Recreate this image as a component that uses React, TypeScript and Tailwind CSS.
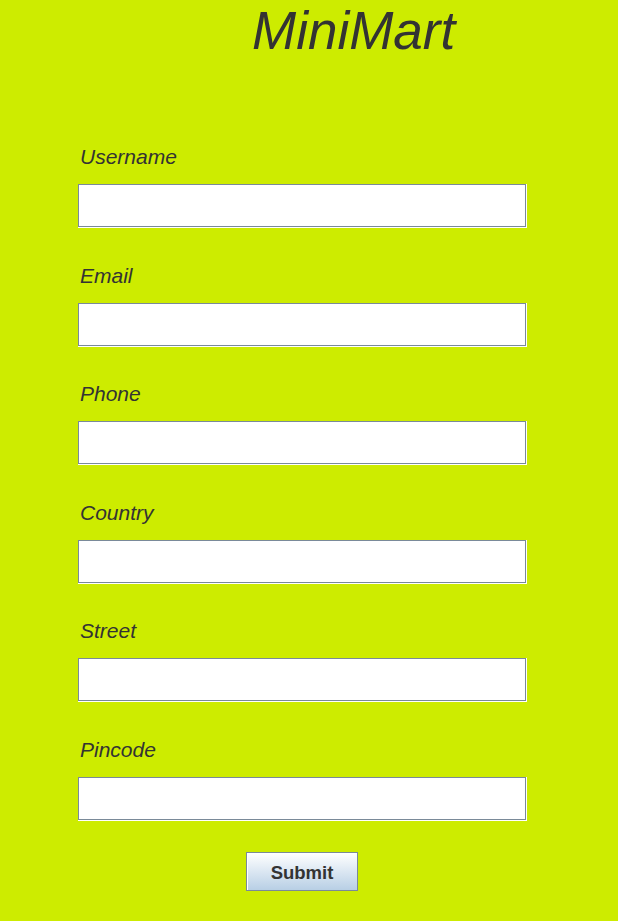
import { FC } from "react";

const fields = [
  { label: "Username", gap: "mt-[84px]" },
  { label: "Email", gap: "mt-[36px]" },
  { label: "Phone", gap: "mt-[35px]" },
  { label: "Country", gap: "mt-[36px]" },
  { label: "Street", gap: "mt-[35px]" },
  { label: "Pincode", gap: "mt-[36px]" },
];

const TextField: FC = () => {
  return (
    <div className="w-[449px] h-[44px] bg-white border-r border-b border-white">
      <div className="w-full h-full border border-[#7a8a99] bg-white" />
    </div>
  );
};

const App: FC = () => {
  return (
    <div
      className="w-[618px] h-[921px] bg-[#cdec00] pl-[78px] pt-[1px] overflow-hidden"
      style={{ fontFamily: '"Liberation Sans", Arial, sans-serif' }}
    >
      <h1 className="ml-[174px] text-[53px] leading-[60px] italic text-[#333333]">
        MiniMart
      </h1>
      {fields.map((f) => (
        <div key={f.label} className={f.gap}>
          <p className="pl-[2px] text-[21px] leading-[24px] italic text-[#333333]">
            {f.label}
          </p>
          <div className="mt-[15px]">
            <TextField />
          </div>
        </div>
      ))}
      <div className="flex mt-[31px] ml-[168px]">
        <button className="w-[112px] h-[39px] pt-[2px] border border-[#7a8a99] bg-gradient-to-b from-[#ffffff] to-[#b8cfe5] text-[18.5px] font-bold text-[#333333] shadow-[inset_1px_1px_0_#ffffff]">
          Submit
        </button>
      </div>
    </div>
  );
};

export default App;
